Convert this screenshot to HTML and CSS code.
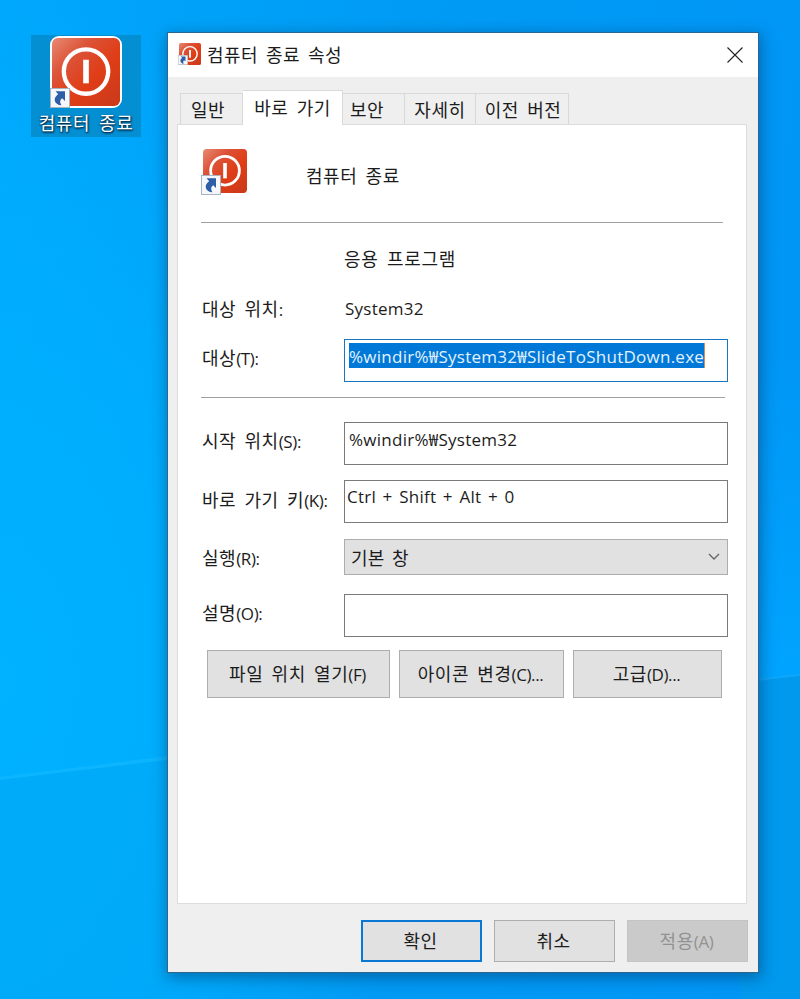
FILE: index.html
```
<!DOCTYPE html>
<html lang="ko">
<head>
<meta charset="utf-8">
<title>컴퓨터 종료 속성</title>
<link rel="stylesheet" href="styles.css">
</head>
<body>
<svg width="0" height="0" class="defs">
  <defs>
    <linearGradient id="red" x1="0" y1="0" x2="1" y2="1">
      <stop offset="0" stop-color="#e88a73"/>
      <stop offset=".3" stop-color="#dc5237"/>
      <stop offset=".6" stop-color="#df3d16"/>
      <stop offset="1" stop-color="#c93a1c"/>
    </linearGradient>
    <linearGradient id="beam" x1="0" y1="0" x2="0" y2="1">
      <stop offset="0" stop-color="#00a4ff" stop-opacity="0"/>
      <stop offset="1" stop-color="#00a4ff"/>
    </linearGradient>
    <symbol id="power" viewBox="0 0 72 72">
      <rect x="0" y="0" width="72" height="72" rx="6" fill="url(#red)"/>
      <circle cx="36" cy="35.5" r="23.5" fill="none" stroke="#fff" stroke-width="4.6"/>
      <rect x="33" y="23" width="6" height="25" fill="#fff"/>
    </symbol>
    <symbol id="shortcut" viewBox="0 0 20 20">
      <rect x=".5" y=".5" width="19" height="19" fill="#f6f7fa" stroke="#a9b4c2"/>
      <path d="M5.5 3.2H15V13L12.2 10.3Q8.6 12.6 11.3 17.2Q8.6 17.6 6.6 15.6C3.6 12.4 4.4 9 8.2 6.2Z" fill="#2d5da6"/>
    </symbol>
  </defs>
</svg>
<svg class="wallpaper" viewBox="0 0 800 999" preserveAspectRatio="none">
  <path d="M740 350H800V675L740 682Z" fill="url(#beam)"/>
  <path d="M740 682L800 675V999H740Z" fill="#0099ee"/>
  <path d="M0 777L168 756V760L0 780Z" fill="#1bbcff" opacity=".45"/>
  <path d="M0 780L168 760V999H0Z" fill="#00a8f6" opacity=".5"/>
  <path d="M758 679L800 674V676L758 681Z" fill="#26b2ff" opacity=".4"/>
</svg>

<div class="desktop-icon">
  <div class="icon icon-desktop">
    <svg class="main"><use href="#power"/></svg>
    <svg class="arrow"><use href="#shortcut"/></svg>
  </div>
  <div class="caption">컴퓨터 종료</div>
</div>

<section class="window">
  <header class="titlebar">
    <div class="icon icon-title">
      <svg class="main"><use href="#power"/></svg>
      <svg class="arrow"><use href="#shortcut"/></svg>
    </div>
    <h1>컴퓨터 종료 속성</h1>
    <svg class="close" viewBox="0 0 16 16"><path d="M.5 .5L15.5 15.5M15.5 .5L.5 15.5" stroke="#222" stroke-width="1.1"/></svg>
  </header>

  <nav class="tabs">
    <div class="tab t1">일반</div>
    <div class="tab active t2">바로 가기</div>
    <div class="tab t3">보안</div>
    <div class="tab t4">자세히</div>
    <div class="tab t5">이전 버전</div>
  </nav>

  <main class="panel">
    <div class="head">
      <div class="icon icon-head">
        <svg class="main"><use href="#power"/></svg>
        <svg class="arrow"><use href="#shortcut"/></svg>
      </div>
      <div class="name">컴퓨터 종료</div>
    </div>
    <div class="rule rule-top"></div>
    <div class="row type"><span></span><span>응용 프로그램</span></div>
    <div class="row location"><span>대상 위치<i>:</i></span><span class="latin">System32</span></div>
    <div class="row target"><span class="label">대상<i>(T):</i></span><div class="field latin focus"><mark>%windir%₩System32₩SlideToShutDown.exe</mark></div></div>
    <div class="rule rule-mid"></div>
    <div class="row start"><span class="label">시작 위치<i>(S):</i></span><div class="field latin">%windir%₩System32</div></div>
    <div class="row key"><span class="label">바로 가기 키<i>(K):</i></span><div class="field latin hotkey">Ctrl + Shift + Alt + 0</div></div>
    <div class="row run"><span>실행<i>(R):</i></span><div class="select">기본 창<svg viewBox="0 0 12 8"><path d="M1 1L6 6L11 1" fill="none" stroke="#666" stroke-width="1.4"/></svg></div></div>
    <div class="row comment"><span class="label">설명<i>(O):</i></span><div class="field"></div></div>
    <div class="actions">
      <div class="button b1">파일 위치 열기<i>(F)</i></div>
      <div class="button b2">아이콘 변경<i>(C)...</i></div>
      <div class="button b3">고급<i>(D)...</i></div>
    </div>
  </main>

  <footer class="footer">
    <div class="button default">확인</div>
    <div class="button">취소</div>
    <div class="button disabled">적용<i>(A)</i></div>
  </footer>
</section>
</body>
</html>
```

FILE: styles.css
```
* { box-sizing: border-box; }
body {
  margin: 0;
  width: 800px;
  height: 999px;
  overflow: hidden;
  position: relative;
  background:
    radial-gradient(ellipse 420px 680px at 0 680px, #00b2ff 0%, rgba(0,176,255,.8) 45%, rgba(0,170,252,0) 100%),
    linear-gradient(97deg, #00a8fc 0%, #009bf4 45%, #0095f6 100%);
  font: 18px/24px "Noto Sans CJK KR", sans-serif;
  letter-spacing: .55px;
  word-spacing: 2.7px;
  color: #1c1c1c;
  white-space: nowrap;
}
i { font: 17px/20px "Open Sans", "Noto Sans", sans-serif; letter-spacing: -.4px; }
.defs, .wallpaper { position: absolute; left: 0; top: 0; }
.wallpaper { width: 800px; height: 999px; }

.icon { position: relative; flex: none; }
.icon svg { display: block; }
.icon .main { width: 100%; height: 100%; }
.icon .arrow { position: absolute; }

.desktop-icon {
  position: absolute;
  left: 31px;
  top: 35px;
  width: 110px;
  height: 102px;
  background: #048fd3;
  padding-top: 1px;
  display: flex;
  flex-direction: column;
  align-items: center;
}
.icon-desktop { width: 72px; height: 72px; border: 2px solid #fff; border-radius: 9px; background: #fff; }
.icon-desktop .arrow { width: 20px; height: 20px; left: -2px; bottom: -2px; }
.caption { margin-top: 2px; color: #fff; word-spacing: 3.5px; text-shadow: 1px 1px 2px #002a48, 0 1px 2px #002a48; }

.window {
  position: absolute;
  left: 167px;
  top: 32px;
  width: 592px;
  height: 941px;
  border: 1px solid #2b678f;
  background: #efefef;
  box-shadow: 1px 4px 14px 1px rgba(0,35,75,.42);
  display: flex;
  flex-direction: column;
}
.titlebar { height: 44px; background: #fff; display: flex; align-items: center; padding: 0 15px 0 11px; }
.icon-title { width: 22px; height: 22px; margin-bottom: 2px; }
.icon-title .arrow { width: 10px; height: 10px; left: -1px; bottom: 0; }
h1 { margin: -2px auto 0 6px; font: inherit; word-spacing: 2.5px; letter-spacing: .45px; }
.close { width: 16px; height: 16px; }

.tabs { height: 47px; display: flex; align-items: flex-end; padding-left: 12px; }
.tab { height: 31px; border: 1px solid #d9d9d9; border-width: 1px 1px 0 0; padding-top: 3px; text-align: center; }
.t1 { width: 63px; border-left-width: 1px; padding-right: 7px; }
.t2 { width: 100px; }
.t3 { width: 62px; padding-right: 13px; }
.t4 { width: 71px; }
.t5 { width: 93px; padding-left: 2px; }
.tab.active { height: 35px; margin-bottom: -1px; background: #fff; position: relative; padding-top: 4px; }

.panel {
  width: 570px;
  height: 780px;
  margin-left: 9px;
  border: 1px solid #dcdcdc;
  background: #fff;
  padding: 24px 18px 0 23px;
}
.head { display: flex; height: 46px; align-items: center; }
.icon-head { width: 44px; height: 44px; margin: 0 0 2px 2px; }
.icon-head .arrow { width: 20px; height: 20px; left: -2px; bottom: -2px; }
.name { margin: 6px 0 0 59px; }
.rule { height: 1px; background: #a0a0a0; }
.rule-top { width: 522px; margin-top: 27px; }
.rule-mid { width: 524px; margin-top: 15px; }
.row { display: grid; grid-template-columns: 142px 384px; margin-left: 1px; align-items: center; }
.type { margin-top: 23px; height: 24px; letter-spacing: .7px; }
.location { margin-top: 24px; height: 24px; }
.target { margin-top: 21px; }
.start { margin-top: 24px; }
.key { margin-top: 15px; }
.run { margin-top: 16px; }
.comment { margin-top: 19px; }
.label { padding-bottom: 7px; }
.latin { font: 17px/24px "Open Sans", "Noto Sans CJK KR", sans-serif; letter-spacing: .26px; word-spacing: 0; }
.location .latin { padding: 3px 0 0 1px; }
.key .label { padding-bottom: 5px; }
.field { height: 43px; border: 1px solid #7a7a7a; padding: 5px 4px; background: #fff; }
.focus { border-color: #1975bd; padding-top: 3px; }
mark { display: inline-block; height: 25px; line-height: 27px; background: #0078d7; color: #e4f2ff; border-right: 1px solid #d98b52; }
.hotkey { padding: 4px 0 0 2px; word-spacing: 1.9px; }
.select { height: 36px; border: 1px solid #adadad; background: #e1e1e1; display: flex; align-items: center; justify-content: space-between; padding: 0 7px 0 6px; letter-spacing: .3px; word-spacing: 2px; }
.select svg { width: 12px; height: 8px; }
.actions { display: flex; gap: 9px; margin: 13px 0 0 6px; }
.button { height: 48px; border: 1px solid #adadad; background: #e1e1e1; text-align: center; padding: 10px 2px 0 0; }
.b1 { width: 183px; }
.b2 { width: 165px; }
.b3 { width: 149px; }
.footer { display: flex; gap: 12px; justify-content: flex-end; padding: 16px 10px 0 0; }
.footer .button { width: 121px; height: 42px; padding-top: 7px; }
.footer .default { border: 2px solid #0878d4; padding-top: 6px; }
.footer .disabled { border-color: #c4c4c4; background: #cacaca; color: #929292; }
```
